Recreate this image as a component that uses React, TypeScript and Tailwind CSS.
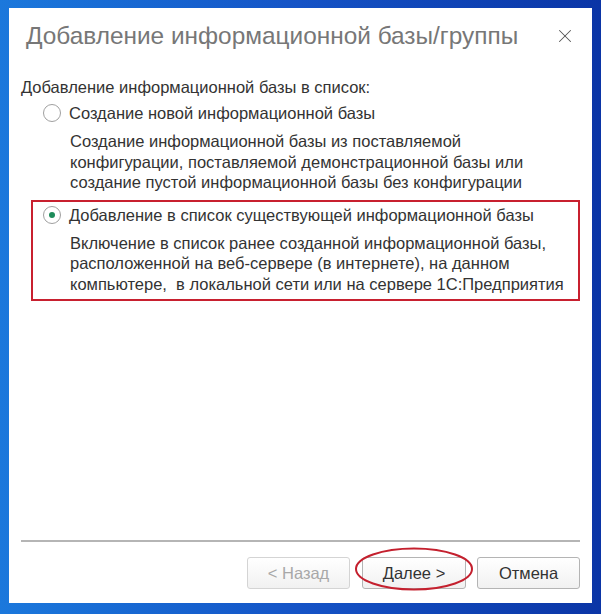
import { X } from "lucide-react";

const font = { fontFamily: '"Liberation Sans", Arial, sans-serif' };

function Radio({ checked }: { checked?: boolean }) {
  return (
    <span className="flex h-[18px] w-[18px] shrink-0 items-center justify-center rounded-full border border-[#a0a0a0] bg-white">
      {checked && <span className="h-[6px] w-[6px] rounded-full bg-[#1e8c5a]" />}
    </span>
  );
}

function Option({
  checked,
  title,
  lines,
}: {
  checked?: boolean;
  title: string;
  lines: string[];
}) {
  return (
    <div>
      <div className="flex h-5 items-center gap-[8px]">
        <Radio checked={checked} />
        <span className="text-[16.5px] leading-5 text-[#333]">{title}</span>
      </div>
      <div className="mt-[8px] pl-[27px] text-[16.5px] leading-[20.5px] text-[#333]">
        {lines.map((l) => (
          <div key={l} className="whitespace-pre">
            {l}
          </div>
        ))}
      </div>
    </div>
  );
}

function Button({ label, disabled }: { label: string; disabled?: boolean }) {
  return (
    <button
      className={`h-[32px] rounded-[3px] border bg-gradient-to-b from-white to-[#f1f1f1] text-[16.5px] ${
        disabled ? "border-[#d4d4d4] text-[#a8a8a8]" : "border-[#b4b4b4] text-[#333]"
      }`}
      style={font}
    >
      {label}
    </button>
  );
}

export default function App() {
  return (
    <div
      className="relative h-[614px] w-[601px] bg-gradient-to-r from-[#1b78dc] via-[#1553c6] to-[#0b35a6] pb-[11px] pl-[9px] pr-[9px] pt-[8px]"
      style={font}
    >
      <div className="flex h-full flex-col bg-white">
        <div className="mt-[12px] flex h-[32px] items-center justify-between pl-[17px] pr-[16px]">
          <span className="text-[24.4px] text-[#777]">Добавление информационной базы/группы</span>
          <X className="h-[22px] w-[22px] text-[#555]" strokeWidth={1.1} />
        </div>

        <div className="mt-[25px] pl-[12px] text-[16.5px] leading-5 text-[#333]">
          Добавление информационной базы в список:
        </div>

        <div className="mt-[6px] pl-[34px]">
          <Option
            title="Создание новой информационной базы"
            lines={[
              "Создание информационной базы из поставляемой",
              "конфигурации, поставляемой демонстрационной базы или",
              "создание пустой информационной базы без конфигурации",
            ]}
          />
        </div>

        <div className="ml-[22px] mt-[7px] w-[549px] border-2 border-[#c8202f] pb-[5px] pl-[10px] pt-[3px]">
          <Option
            checked
            title="Добавление в список существующей информационной базы"
            lines={[
              "Включение в список ранее созданной информационной базы,",
              "расположенной на веб-сервере (в интернете), на данном",
              "компьютере,  в локальной сети или на сервере 1С:Предприятия",
            ]}
          />
        </div>

        <div className="flex-1" />

        <div className="mx-[12px] h-[2px] bg-[#b5b5b5]" />

        <div className="flex justify-end gap-[11px] pb-[14px] pr-[12px] pt-[15px]">
          <div className="flex gap-[12px]">
            <div className="grid w-[103px]">
              <Button label="< Назад" disabled />
            </div>
            <div className="grid w-[104px]">
              <Button label="Далее >" />
            </div>
          </div>
          <div className="grid w-[103px]">
            <Button label="Отмена" />
          </div>
        </div>
      </div>

      <svg
        className="absolute left-[354px] top-[547px]"
        width="120"
        height="44"
        viewBox="0 0 120 44"
      >
        <ellipse cx="60" cy="22" rx="58" ry="20.5" fill="none" stroke="#c4202e" strokeWidth="2" />
      </svg>
    </div>
  );
}
